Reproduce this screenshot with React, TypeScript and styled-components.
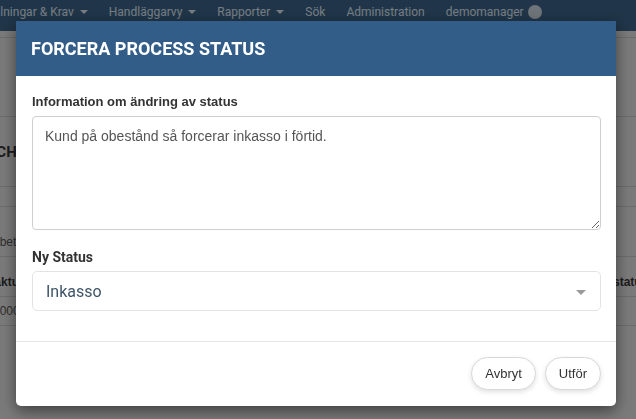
import React from "react";
import styled, { createGlobalStyle } from "styled-components";

const Global = createGlobalStyle`
  html, body { margin: 0; padding: 0; }
  body { background: #dfdfdf; font-family: "Liberation Sans", Arial, sans-serif; overflow: hidden; }
  * { box-sizing: border-box; }
`;

const Page = styled.div`
  width: 636px;
  height: 419px;
  overflow: hidden;
  background: #dfdfdf;
`;

const NavBar = styled.nav`
  height: 31px;
  background: #3b6185;
  display: flex;
  align-items: flex-start;
  gap: 21px;
  padding-top: 4px;
  margin-left: -24px;
  font-family: Roboto, sans-serif;
  font-size: 12px;
  color: #d8e3ee;
  white-space: nowrap;
`;

const NavItem = styled.span`
  flex: 0 0 auto;
  display: flex;
  align-items: center;
  gap: 6px;
  line-height: 16px;
`;

const Caret = styled.span`
  width: 0;
  height: 0;
  border-left: 4px solid transparent;
  border-right: 4px solid transparent;
  border-top: 4px solid currentColor;
`;

const Avatar = styled.span`
  width: 14px;
  height: 14px;
  border-radius: 50%;
  background: #c9d3dc;
  margin-left: -2px;
`;

const Content = styled.div`
  display: flex;
  flex-direction: column;
`;

const Row = styled.div<{ $h: number; $line?: boolean; $end?: boolean }>`
  height: ${(p) => p.$h}px;
  border-bottom: ${(p) => (p.$line === false ? "none" : "1px solid #c4c4c4")};
  display: grid;
  grid-template-columns: 590px 1fr;
  align-items: ${(p) => (p.$end ? "end" : "center")};
  padding-bottom: ${(p) => (p.$end ? 7 : 0)}px;
  font-size: 12px;
  color: #444;
  white-space: nowrap;
  overflow: hidden;
`;

const Cell = styled.span<{ $shift?: number; $bold?: boolean; $size?: number; $font?: string }>`
  margin-left: ${(p) => p.$shift ?? 0}px;
  font-family: ${(p) => p.$font ?? '"Liberation Sans", Arial, sans-serif'};
  font-weight: ${(p) => (p.$bold ? 700 : 400)};
  font-size: ${(p) => p.$size ?? 12}px;
  color: ${(p) => (p.$bold ? "#333" : "#555")};
`;

const Overlay = styled.div`
  position: fixed;
  inset: 0;
  background: rgba(0, 0, 0, 0.45);
`;

const Modal = styled.div`
  position: fixed;
  top: 21px;
  left: 16px;
  width: 600px;
  background: #fff;
  border-radius: 0 0 5px 5px;
  box-shadow: 0 5px 15px rgba(0, 0, 0, 0.5);
  overflow: hidden;
  display: flex;
  flex-direction: column;
`;

const Header = styled.div`
  height: 55px;
  background: #325d88;
  display: flex;
  align-items: center;
  padding: 0 15px;
`;

const Title = styled.h4`
  margin: 0;
  font-family: Roboto, sans-serif;
  font-weight: 700;
  font-size: 18px;
  color: #fff;
`;

const Body = styled.div`
  padding: 17px 15px 15px 16px;
  display: flex;
  flex-direction: column;
`;

const Group = styled.div`
  display: flex;
  flex-direction: column;
  margin-bottom: 15px;
  & + & {
    margin-top: 3px;
  }
`;

const Label = styled.label<{ $roboto?: boolean }>`
  font-family: ${(p) => (p.$roboto ? "Roboto, sans-serif" : '"Liberation Sans", Arial, sans-serif')};
  font-weight: 700;
  font-size: ${(p) => (p.$roboto ? 14 : 13)}px;
  line-height: 18px;
  color: #333;
  margin-bottom: 5px;
`;

const TextArea = styled.textarea`
  height: 114px;
  width: 100%;
  border: 1px solid #cfcfcf;
  border-radius: 4px;
  padding: 9px 12px 7px;
  font-family: "Liberation Sans", Arial, sans-serif;
  font-size: 14px;
  line-height: 20px;
  color: #555;
  resize: vertical;
  outline: none;
`;

const Select = styled.div`
  height: 40px;
  border: 1px solid #e3e3e3;
  border-radius: 5px;
  display: flex;
  align-items: center;
  justify-content: space-between;
  padding: 0 14px 0 13px;
  font-family: Roboto, sans-serif;
  font-size: 16px;
  color: #3f5468;
`;

const SelectCaret = styled.span`
  width: 0;
  height: 0;
  border-left: 5px solid transparent;
  border-right: 5px solid transparent;
  border-top: 5px solid #999;
  margin-top: 3px;
`;

const Footer = styled.div`
  border-top: 1px solid #e5e5e5;
  height: 65px;
  display: flex;
  justify-content: flex-end;
  align-items: flex-start;
  gap: 9px;
  padding: 15px 15px 0 0;
`;

const Button = styled.button`
  height: 33px;
  padding: 0 13px;
  border: 1px solid #d8d8d8;
  border-radius: 17px;
  background: #fff;
  box-shadow: 0 2px 5px rgba(0, 0, 0, 0.12);
  font-family: "Liberation Sans", Arial, sans-serif;
  font-size: 13px;
  color: #333;
`;

export default function App() {
  return (
    <>
      <Global />
      <Page>
        <NavBar>
          <NavItem>Betalningar &amp; Krav <Caret /></NavItem>
          <NavItem>Handläggarvy <Caret /></NavItem>
          <NavItem>Rapporter <Caret /></NavItem>
          <NavItem>Sök</NavItem>
          <NavItem>Administration</NavItem>
          <NavItem>demomanager <Avatar /></NavItem>
        </NavBar>
        <Content>
          <Row $h={7}><span /></Row>
          <Row $h={79}><span /></Row>
          <Row $h={70}><Cell $bold $size={15} $font="Roboto, sans-serif" $shift={-41}>SEARCH</Cell></Row>
          <Row $h={20}><span /></Row>
          <Row $h={50} $end><Cell $shift={-7}>obetalda fakturor</Cell></Row>
          <Row $h={40} $end><Cell $bold $shift={-13}>Faktura</Cell><Cell $bold $shift={-17}>Processtatus</Cell></Row>
          <Row $h={29}><Cell $shift={-7}>10000</Cell></Row>
          <Row $h={88} $line={false}><span /></Row>
        </Content>
      </Page>
      <Overlay />
      <Modal role="dialog">
        <Header>
          <Title>FORCERA PROCESS STATUS</Title>
        </Header>
        <Body>
          <Group>
            <Label>Information om ändring av status</Label>
            <TextArea defaultValue="Kund på obestånd så forcerar inkasso i förtid." />
          </Group>
          <Group>
            <Label $roboto>Ny Status</Label>
            <Select>
              <span>Inkasso</span>
              <SelectCaret />
            </Select>
          </Group>
        </Body>
        <Footer>
          <Button>Avbryt</Button>
          <Button>Utför</Button>
        </Footer>
      </Modal>
    </>
  );
}
